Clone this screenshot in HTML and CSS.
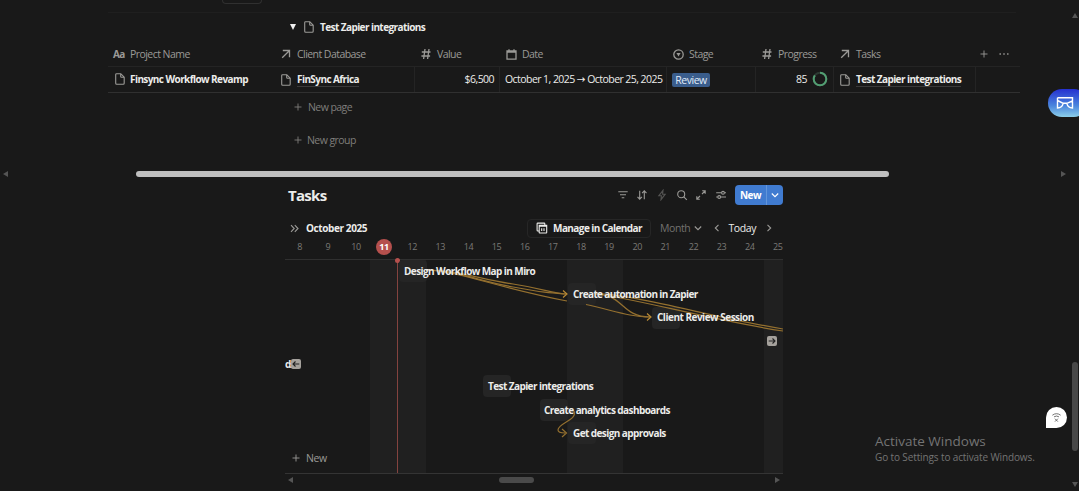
FILE: index.html
```html
<!DOCTYPE html>
<html lang="en">
<head>
  <meta charset="utf-8">
  <title>Projects</title>
  <link rel="stylesheet" href="styles.css">
</head>
<body>
  <!-- shared icons -->
  <svg class="sprite">
    <symbol id="page" viewBox="0 0 10 12"><path d="M1.5.7h4.3l3.4 3.5v6q0 1-1 1H1.7q-1 0-1-1V1.6q0-.9.8-.9zM5.7.9v2.6q0 .8.8.8h2.6"/></symbol>
    <symbol id="arrow-up" viewBox="0 0 10 10"><path d="M1.8 1.5h6.7v6.7M8.3 1.7 1.2 8.8"/></symbol>
    <symbol id="hash" viewBox="0 0 10 12"><path d="M4 1 2.6 11M8 1 6.6 11M.8 4h8.7M.4 8h8.7"/></symbol>
    <symbol id="plus" viewBox="0 0 8 8"><path d="M4 .5v7M.5 4h7"/></symbol>
    <symbol id="down" viewBox="0 0 8 8"><path d="m.8 2.5 3.2 3.2 3.2-3.2"/></symbol>
  </svg>

  <div class="database">
    <div class="tab-edge"></div>
    <div class="group-title">
      <span class="triangle"></span>
      <svg class="icon page"><use href="#page"/></svg>
      <b>Test Zapier integrations</b>
    </div>

    <div class="row head">
      <div class="cell"><b class="aa">Aa</b><span>Project Name</span></div>
      <div class="cell"><svg class="icon up"><use href="#arrow-up"/></svg><span>Client Database</span></div>
      <div class="cell"><svg class="icon hash"><use href="#hash"/></svg><span>Value</span></div>
      <div class="cell"><svg class="icon cal" viewBox="0 0 11 11"><path d="M1 1.8h9v8.4H1zM1 3h9M3 .3v2M8 .3v2"/></svg><span>Date</span></div>
      <div class="cell"><svg class="icon stage" viewBox="0 0 11 11"><circle cx="5.5" cy="5.5" r="4.7"/><path class="solid" d="M3.4 4h4.2L5.5 7.6z"/></svg><span>Stage</span></div>
      <div class="cell"><svg class="icon hash"><use href="#hash"/></svg><span>Progress</span></div>
      <div class="cell"><svg class="icon up"><use href="#arrow-up"/></svg><span>Tasks</span></div>
      <div class="cell"><svg class="icon plus"><use href="#plus"/></svg><svg class="icon dots" viewBox="0 0 10 4"><path d="M.5 2h1.4M4.3 2h1.4M8.1 2h1.4"/></svg></div>
    </div>
    <div class="row data">
      <div class="cell"><svg class="icon page"><use href="#page"/></svg><b>Finsync Workflow Revamp</b></div>
      <div class="cell"><svg class="icon page"><use href="#page"/></svg><b class="link">FinSync Africa</b></div>
      <div class="cell value">$6,500</div>
      <div class="cell date">October 1, 2025 <i class="to">→</i> October 25, 2025</div>
      <div class="cell"><span class="tag">Review</span></div>
      <div class="cell progress">85<svg class="ring" viewBox="0 0 16 16"><circle cx="8" cy="8" r="6.3"/><circle class="done" cx="8" cy="8" r="6.3" pathLength="100"/></svg></div>
      <div class="cell"><svg class="icon page"><use href="#page"/></svg><b class="link">Test Zapier integrations</b></div>
      <div class="cell"></div>
    </div>

    <div class="add new-page"><svg class="icon plus"><use href="#plus"/></svg><span>New page</span></div>
    <div class="add new-group"><svg class="icon plus"><use href="#plus"/></svg><span>New group</span></div>
  </div>

  <div class="hscroll">
    <span class="tri-left"></span><span class="thumb"></span><span class="tri-right"></span>
  </div>

  <div class="tasks">
    <div class="toolbar">
      <h2>Tasks</h2>
      <div class="tools">
        <svg class="icon" viewBox="0 0 12 12"><path d="M1.3 2.8h9.4M3 5.8h6M4.7 8.8h2.6"/></svg>
        <svg class="icon" viewBox="0 0 12 12"><path d="M3.7 1.8v8.3M1.5 7.8l2.2 2.4 2.2-2.4M8.3 10.2V1.9M6.1 4.2l2.2-2.4 2.2 2.4"/></svg>
        <svg class="icon dim" viewBox="0 0 12 12"><path d="M7 1.3 2.8 6.8h2.6L5 10.7l4.2-5.5H6.6z"/></svg>
        <svg class="icon" viewBox="0 0 12 12"><circle cx="5.2" cy="5.2" r="3.5"/><path d="m7.8 7.8 3 3"/></svg>
        <svg class="icon" viewBox="0 0 12 12"><path d="M7.2 1.8h3v3M10 2 7 5M4.8 10.2h-3v-3M2 10l3-3"/></svg>
        <svg class="icon" viewBox="0 0 12 12"><path d="M1.2 3.8h5.2M9.6 3.8h1.4M1.2 8h1.5M5.8 8H11"/><circle cx="8" cy="3.8" r="1.4"/><circle cx="4.2" cy="8" r="1.4"/></svg>
      </div>
      <div class="new-btn"><b>New</b><i><svg class="icon down"><use href="#down"/></svg></i></div>
    </div>

    <div class="cal-head">
      <svg class="icon chev" viewBox="0 0 9 9"><path d="m1 1.2 3.2 3.3L1 7.8M4.8 1.2 8 4.5 4.8 7.8"/></svg>
      <b class="month">October 2025</b>
      <div class="manage">
        <svg class="icon" viewBox="0 0 12 12"><path d="M3.2 3.3h7.5v7.2q0 .5-.5.5H3.7q-.5 0-.5-.5zM3.2 4.3h7.5M3 9H1.8q-.7 0-.7-.7V1.8q0-.7.7-.7h6.3q.7 0 .7.7v1.4M5.7 6.2v2.9M8 6.2v2.9"/></svg>
        <b>Manage in Calendar</b>
      </div>
      <span class="range">Month</span>
      <svg class="icon down"><use href="#down"/></svg>
      <svg class="icon prev" viewBox="0 0 8 8"><path d="M5.5.8 2.3 4l3.2 3.2"/></svg>
      <span class="today">Today</span>
      <svg class="icon next" viewBox="0 0 8 8"><path d="M2.5.8 5.7 4 2.5 7.2"/></svg>
    </div>

    <div class="days">
      <span>8</span><span>9</span><span>10</span><span class="now"><em>11</em></span><span>12</span><span>13</span><span>14</span><span>15</span><span>16</span><span>17</span><span>18</span><span>19</span><span>20</span><span>21</span><span>22</span><span>23</span><span>24</span><span>25</span>
    </div>

    <!-- timeline canvas, one day is 28.14px wide and one row 23.5px high -->
    <div class="timeline">
      <div class="weekend w1"></div>
      <div class="weekend w2"></div>
      <div class="weekend w3"></div>
      <div class="now-line"></div>
      <div class="task k1"></div>
      <div class="task k2"></div>
      <div class="task k3"></div>
      <div class="task k4"></div>
      <div class="task k5"></div>
      <div class="task k6"></div>
      <svg class="links" viewBox="0 0 498 214">
        <path d="M141 10C172 10 195 19 228 24S265 33 281 34"/>
        <path d="M141 10C172 11 195 21 228 27S265 33 281 34"/>
        <path d="M141 10C175 11 205 26 282 41M301 44.5C330 51 345 57 365 57"/>
        <path d="M310 34C339 34 336 57 365 57"/>
        <path d="M310 34C345 33 430 58 498 69"/>
        <path d="M310 34C340 36 430 61 498 71"/>
        <path class="head-mark" d="M278 30.5 282 34 278 37.5M362 53.5l4 3.5-4 3.5"/>
        <path d="M289 151C293 160 273 163 273 170Q273 173 280 173M277 169l4.5 4-4.5 4"/>
      </svg>
      <b class="label l1">Design Workflow Map in Miro</b>
      <b class="label l2">Create automation in Zapier</b>
      <b class="label l3">Client Review Session</b>
      <b class="label l4">Test Zapier integrations</b>
      <b class="label l5">Create analytics dashboards</b>
      <b class="label l6">Get design approvals</b>
      <b class="label l7">ds</b>
      <svg class="jump left" viewBox="0 0 10 10"><path d="M8.3 5H2M4.5 2.5 2 5l2.5 2.5"/></svg>
      <svg class="jump right" viewBox="0 0 10 10"><path d="M1.7 5H8M5.5 2.5 8 5 5.5 7.5"/></svg>
      <div class="add-task"><svg class="icon plus"><use href="#plus"/></svg><span>New</span></div>
    </div>
    <div class="tscroll"><span class="tri-left"></span><span class="thumb"></span><span class="tri-right"></span></div>
  </div>

  <div class="vscroll"><span class="tri-up"></span><span class="thumb"></span><span class="tri-down"></span></div>
  <div class="mail"><svg viewBox="0 0 18 14"><path d="M1.5 1.8h15V5L10.8 7.3q1 4.2 5.7 4.7V5M1.5 1.8V12q4.700-.5 5.700-4.700L1.500 4.500M7.200 7.300h3.600"/></svg></div>
  <div class="offline"><svg viewBox="0 0 12 12"><path d="M1.5 3.5Q6 .2 10.5 3.5M3.3 5.3Q6 3.5 8.7 5.3M4.3 7.3l3.2 3.2M7.5 7.3l-3.2 3.2"/></svg></div>
  <div class="watermark">
    <p class="big">Activate Windows</p>
    <p class="small">Go to Settings to activate Windows.</p>
  </div>
</body>
</html>
```
FILE: styles.css
```css
* {
  box-sizing: border-box;
}

body {
  margin: 0;
  width: 1079px;
  height: 491px;
  overflow: hidden;
  position: relative;
  background: #191919;
  color: #ececea;
  font-family: "Open Sans", "Noto Sans", sans-serif;
  font-size: 10.5px;
  line-height: 14px;
  letter-spacing: -0.55px;
  white-space: nowrap;
}

b {
  font-size: 10px;
  font-weight: 700;
  letter-spacing: -0.58px;
}

.sprite {
  position: absolute;
  width: 0;
  height: 0;
}

.icon {
  fill: none;
  stroke: #9b9a97;
  stroke-width: 1.1;
  flex: none;
  width: 12px;
  height: 12px;
}

.icon.page { width: 10px; height: 12px; }
.icon.up { width: 10px; height: 10px; }
.icon.hash { width: 10px; height: 12px; }
.icon.cal, .icon.stage { width: 11px; height: 11px; }
.icon.plus { width: 8px; height: 8px; stroke-width: .9; }
.icon.down { width: 8px; height: 8px; }
.solid { fill: #9b9a97; stroke: none; }

/* project table */
.database {
  height: 171px;
  padding-left: 108px;
}

.tab-edge {
  width: 908px;
  height: 13px;
  border-bottom: 1px solid #1f1f1f;
}

.tab-edge::before {
  content: "";
  display: block;
  width: 38px;
  height: 3px;
  margin-left: 114px;
  border: 1px solid #303030;
  border-top: 0;
  border-radius: 0 0 4px 4px;
}

.group-title {
  display: flex;
  align-items: center;
  height: 28px;
  padding-left: 182px;
}

.group-title .icon { margin-right: 6px; }

.triangle {
  border: 3.5px solid transparent;
  border-top: 6px solid #f0f0f0;
  border-bottom: 0;
  margin-right: 8px;
}

.row {
  display: grid;
  grid-template-columns: 168px 139px 85px 167px 89px 78px 142px 44px;
  width: 912px;
}

.cell {
  display: flex;
  align-items: center;
}

.head {
  height: 26px;
  border-bottom: 1px solid #242424;
  color: #9b9a97;
}

.head .cell { padding: 1px 0 0 6px; }
.head .cell:nth-child(1), .head .cell:nth-child(2) { padding-left: 5px; }
.head .icon, .aa { margin-right: 6px; }
.head .icon { stroke-width: 1.3; }
.head .cell:nth-child(4) .icon, .head .cell:nth-child(5) .icon { margin-right: 5px; }
.aa { width: 11px; }
.head .cell:last-child { padding-left: 4px; }
.head .plus { margin-right: 11px; stroke-width: .9; }
.head .dots { width: 10px; height: 4px; }

.data {
  height: 26px;
  border-bottom: 1px solid #303030;
}

.data .cell {
  padding-left: 6px;
  border-right: 1px solid #242424;
}

.data .cell:nth-child(1), .data .cell:nth-child(8) { border-right: 0; }
.data .cell:nth-child(1) { padding-bottom: 1px; }
.data .cell:nth-child(2) { padding-left: 5px; }
.data .page { margin-right: 5px; }
.data .cell:nth-child(2) .page, .data .cell:nth-child(7) .page { margin-right: 6px; }
.data .cell:nth-child(1) .page { margin-left: 1px; }
.data .cell.value { justify-content: flex-end; padding: 0 5px 1px 0; }
.data .cell.date { padding: 0 0 1px 5px; white-space: pre; letter-spacing: -0.56px; }
.to { font-family: "Noto Sans", "DejaVu Sans", sans-serif; font-style: normal; }
.link { border-bottom: 1px solid #3a3a3a; line-height: 13px; padding-top: 1px; }

.tag {
  margin-left: -1px;
  width: 38px;
  height: 14px;
  line-height: 14px;
  border-radius: 2px;
  background: #3a5d8c;
  color: #e0ebf8;
  text-align: center;
  letter-spacing: -0.45px;
}

.data .progress { justify-content: flex-end; padding: 0 5px 1px 0; }

.ring {
  width: 16px;
  height: 16px;
  margin-left: 5px;
  fill: none;
  stroke: #2d3a33;
  stroke-width: 2;
}

.ring .done {
  stroke: #529e72;
  stroke-dasharray: 85 15;
  transform: rotate(-90deg);
  transform-origin: center;
}

.add {
  display: flex;
  align-items: center;
  gap: 6px;
  padding-left: 186px;
  height: 27px;
  color: #7f7e7b;
}

.add .icon { stroke: #7f7e7b; }
.new-group { margin-top: 6px; gap: 5px; }

/* scrollbars */
.tri-left, .tri-right {
  border: 3.5px solid transparent;
}

.tri-left { border-right: 5px solid #555; border-left: 0; }
.tri-right { border-left: 5px solid #555; border-right: 0; }

.hscroll {
  display: flex;
  align-items: center;
  height: 6px;
  padding: 0 13px 0 3px;
}

.hscroll .thumb {
  width: 753px;
  height: 6px;
  margin: 0 auto 0 128px;
  border-radius: 3px;
  background: #bfbfbf;
}

/* tasks timeline */
.tasks {
  width: 498px;
  margin-left: 285px;
}

.toolbar {
  display: flex;
  align-items: center;
  height: 36px;
  padding-left: 3px;
}

h2 {
  margin: 0 auto 0 0;
  font-size: 15px;
  font-weight: 700;
  letter-spacing: -0.7px;
}

.tools {
  display: flex;
  gap: 7.7px;
  margin-right: 8px;
}

.dim { opacity: .45; }

.new-btn {
  display: flex;
  align-items: center;
  width: 48px;
  height: 20px;
  border-radius: 4px;
  background: #407bd0;
  color: #fff;
}

.new-btn b { width: 31px; text-align: center; }

.new-btn i {
  display: flex;
  align-items: center;
  justify-content: center;
  width: 17px;
  height: 20px;
  border-left: 1px solid #6295da;
}

.new-btn .icon { stroke: #fff; }

.cal-head {
  display: flex;
  align-items: center;
  height: 29px;
  padding: 1px 10px 0 5px;
}

.chev { width: 9px; height: 9px; margin-right: 7px; }
.month { letter-spacing: -0.4px; }

.manage {
  display: flex;
  align-items: center;
  justify-content: center;
  gap: 5px;
  width: 124px;
  height: 19px;
  margin: 0 9px 0 auto;
  border: 1px solid #262626;
  border-radius: 4px;
}

.manage .icon { stroke: #ececea; }
.range { color: #73726f; margin-right: 4px; letter-spacing: -0.4px; }
.prev { width: 8px; height: 8px; margin: 0 7px 0 11px; }
.today { letter-spacing: -0.4px; }
.next { width: 8px; height: 8px; margin-left: 9px; }

.days {
  display: flex;
  align-items: center;
  height: 12px;
  padding: 0 0 2px .6px;
  color: #7b7a77;
  font-size: 9px;
  letter-spacing: -0.4px;
}

.days span {
  flex: none;
  width: 28.14px;
  text-align: center;
}

.now em {
  display: inline-block;
  width: 16px;
  height: 16px;
  line-height: 16px;
  border-radius: 50%;
  background: #b5504d;
  color: #fff;
  font-style: normal;
  font-weight: 700;
}

.timeline {
  position: relative;
  height: 215px;
  margin-top: 5px;
  border-top: 1px solid #303030;
  border-bottom: 1px solid #343434;
}

.weekend {
  position: absolute;
  top: 0;
  height: 213px;
  width: 56px;
  background: #202020;
}

.w1 { left: 85px; }
.w2 { left: 282px; }
.w3 { left: 479px; width: 19px; }

.now-line {
  position: absolute;
  left: 112px;
  top: 0;
  width: 1px;
  height: 213px;
  background: #84433f;
}

.now-line::before {
  content: "";
  position: absolute;
  left: -2px;
  top: -2px;
  width: 5px;
  height: 5px;
  border-radius: 50%;
  background: #b5504d;
}

.task {
  position: absolute;
  width: 28px;
  height: 22px;
  border-radius: 4px;
  background: #252525;
}

.k1 { left: 114px; top: 0; }
.k2 { left: 283px; top: 23px; }
.k3 { left: 367px; top: 47px; }
.k4 { left: 198px; top: 115px; }
.k5 { left: 255px; top: 139px; }
.k6 { left: 283px; top: 162px; }

.links {
  position: absolute;
  left: 0;
  top: 0;
  width: 498px;
  height: 214px;
  fill: none;
  stroke: #94702f;
  stroke-width: 1.2;
}

.head-mark { stroke: #b98a35; }

.label { position: absolute; }
.l1 { left: 119px; top: 4px; }
.l2 { left: 288px; top: 27px; letter-spacing: -0.62px; }
.l3 { left: 372px; top: 50px; letter-spacing: -0.5px; }
.l4 { left: 203px; top: 119px; }
.l5 { left: 259px; top: 143px; }
.l6 { left: 288px; top: 166px; }
.l7 { left: 0; top: 97px; letter-spacing: -1px; }

.jump {
  position: absolute;
  width: 10px;
  height: 10px;
  border-radius: 2px;
  background: #a5a19c;
  fill: none;
  stroke: #222;
  stroke-width: 1.1;
}

.jump.left { left: 6px; top: 99px; }
.jump.right { left: 482px; top: 76px; }

.add-task {
  position: absolute;
  left: 7px;
  top: 191px;
  display: flex;
  align-items: center;
  gap: 6px;
  color: #9b9a97;
  letter-spacing: -0.4px;
}

.tscroll {
  display: flex;
  align-items: center;
  height: 11px;
  padding: 0 3px;
}

.tscroll .thumb {
  width: 35px;
  height: 6px;
  margin: 0 auto 0 206px;
  border-radius: 3px;
  background: #4a4a4a;
}

/* things floating over the page */
.vscroll {
  position: absolute;
  top: 13px;
  right: 0;
  width: 7px;
  height: 476px;
}

.vscroll span { position: absolute; left: 0; }
.tri-up { top: 0; border: 3.5px solid transparent; border-bottom: 5px solid #555; border-top: 0; }
.tri-down { bottom: 2px; border: 3.5px solid transparent; border-top: 5px solid #555; border-bottom: 0; }
.vscroll .thumb { top: 349px; width: 6px; height: 89px; border-radius: 3px; background: #484848; }

.mail {
  position: absolute;
  left: 1048px;
  top: 89px;
  width: 40px;
  height: 28px;
  padding: 7px 8px;
  border-radius: 14px;
  background: linear-gradient(#2530d0, #4a86dd 60%, #8dd0ea);
}

.mail svg {
  display: block;
  width: 18px;
  height: 14px;
  fill: none;
  stroke: #fff;
  stroke-width: 1.4;
}

.offline {
  position: absolute;
  left: 1046px;
  top: 407px;
  width: 21px;
  height: 21px;
  padding: 5px;
  border-radius: 50% 50% 50% 0;
  background: #fff;
}

.offline svg {
  display: block;
  width: 11px;
  height: 11px;
  fill: none;
  stroke: #555;
  stroke-width: .9;
}

.watermark {
  position: absolute;
  left: 875px;
  top: 432px;
  color: #747474;
}

.watermark p { margin: 0; }
.big { font-size: 13.5px; line-height: 18px; letter-spacing: 0; }
.small { font-size: 10px; line-height: 15px; letter-spacing: -0.12px; }
```
